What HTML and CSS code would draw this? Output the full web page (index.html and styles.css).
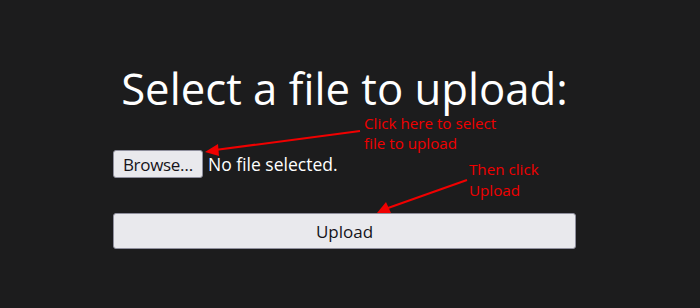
FILE: index.html
```html
<!DOCTYPE html>
<html>
<head>
<meta charset="utf-8">
<link rel="stylesheet" href="styles.css">
</head>
<body>
<main class="form">
  <h1 class="title">Select a file to upload:</h1>
  <div class="file-row">
    <button class="browse">Browse…</button>
    <span class="status">No file selected.</span>
  </div>
  <button class="upload">Upload</button>
</main>
<div class="note note-1"><span class="note-line">Click here to select</span><span class="note-line">file to upload</span></div>
<div class="note note-2"><span class="note-line">Then click</span><span class="note-line">Upload</span></div>
<svg class="arrows" width="700" height="308" viewBox="0 0 700 308">
  <line x1="360" y1="131" x2="215" y2="150" stroke="#f00000" stroke-width="2"/>
  <polygon points="205,152 218,144 219,156" fill="#f00000"/>
  <line x1="467" y1="180" x2="388" y2="208" stroke="#f00000" stroke-width="2"/>
  <polygon points="377,213 386,202 391,213" fill="#f00000"/>
</svg>
</body>
</html>
```
FILE: styles.css
```css
html, body {
  margin: 0;
  padding: 0;
}
body {
  background: #1c1c1d;
  width: 700px;
  height: 308px;
  overflow: hidden;
  position: relative;
  font-family: "Open Sans", "DejaVu Sans", sans-serif;
}
.form {
  margin-left: 113px;
  width: 463px;
  padding-top: 63px;
  display: flex;
  flex-direction: column;
}
.title {
  margin: 0;
  color: #ffffff;
  font-weight: 400;
  font-size: 43.7px;
  line-height: 50px;
  text-align: center;
  letter-spacing: 0;
  white-space: nowrap;
}
.file-row {
  margin-top: 37px;
  display: flex;
  align-items: center;
  gap: 5px;
  height: 28px;
}
.browse {
  height: 28px;
  width: 90px;
  padding: 0;
  border: 1px solid #8f8f9d;
  border-radius: 3px;
  background: #e9e9ed;
  color: #15141a;
  font-family: inherit;
  font-size: 17px;
  letter-spacing: -0.3px;
}
.status {
  color: #ffffff;
  font-size: 17.5px;
}
.upload {
  margin-top: 35px;
  height: 36px;
  width: 463px;
  padding: 0;
  border: 1px solid #8f8f9d;
  border-radius: 3px;
  background: #e9e9ed;
  color: #15141a;
  font-family: inherit;
  font-size: 17px;
}
.note {
  position: absolute;
  color: #f00000;
  font-size: 15.2px;
  white-space: nowrap;
  display: flex;
  flex-direction: column;
  gap: 4px;
}
.note-line {
  display: block;
  line-height: 16px;
}
.note-1 {
  left: 364px;
  top: 115px;
}
.note-2 {
  left: 469px;
  top: 161px;
  gap: 5px;
}
.arrows {
  position: absolute;
  left: 0;
  top: 0;
}
```
